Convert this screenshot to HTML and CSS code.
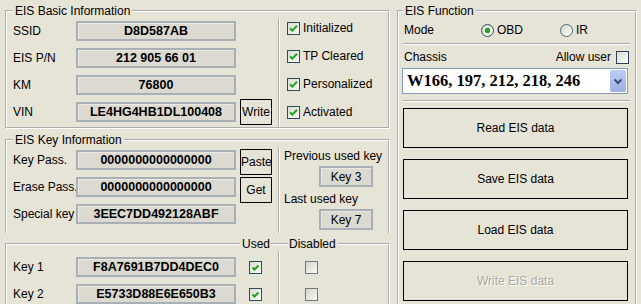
FILE: index.html
```html
<!DOCTYPE html>
<html lang="en">
<head>
    <meta charset="UTF-8">
    <title>EIS Tool</title>
    <link rel="stylesheet" href="styles.css">
</head>
<body>
<div class="window">

    <div class="left">
        <!-- basic info -->
        <fieldset class="group">
            <legend>EIS Basic Information</legend>
            <div class="group-body basic">
                <div class="part">
                    <div class="rows">
                        <div class="row"><span class="lbl">SSID</span><span class="field">D8D587AB</span></div>
                        <div class="row"><span class="lbl">EIS P/N</span><span class="field">212 905 66 01</span></div>
                        <div class="row"><span class="lbl">KM</span><span class="field">76800</span></div>
                        <div class="row"><span class="lbl">VIN</span><span class="field">LE4HG4HB1DL100408</span><button class="btn">Write</button></div>
                    </div>
                </div>
                <div class="side status">
                    <label class="chk"><span class="box on"><svg viewBox="0 0 11 11"><path d="M2 5.2 L4.3 7.6 L9 2.8"/></svg></span>Initialized</label>
                    <label class="chk"><span class="box on"><svg viewBox="0 0 11 11"><path d="M2 5.2 L4.3 7.6 L9 2.8"/></svg></span>TP Cleared</label>
                    <label class="chk"><span class="box on"><svg viewBox="0 0 11 11"><path d="M2 5.2 L4.3 7.6 L9 2.8"/></svg></span>Personalized</label>
                    <label class="chk"><span class="box on"><svg viewBox="0 0 11 11"><path d="M2 5.2 L4.3 7.6 L9 2.8"/></svg></span>Activated</label>
                </div>
            </div>
        </fieldset>

        <!-- key info -->
        <fieldset class="group open-bottom">
            <legend>EIS Key Information</legend>
            <div class="group-body keyinfo">
                <div class="part">
                    <div class="rows">
                        <div class="row"><span class="lbl">Key Pass.</span><span class="field">0000000000000000</span></div>
                        <div class="row"><span class="lbl">Erase Pass.</span><span class="field">0000000000000000</span></div>
                        <div class="row"><span class="lbl">Special key</span><span class="field">3EEC7DD492128ABF</span></div>
                    </div>
                    <div class="btns">
                        <button class="btn">Paste</button>
                        <button class="btn">Get</button>
                    </div>
                </div>
                <div class="side used-keys">
                    <span>Previous used key</span>
                    <span class="field slot">Key 3</span>
                    <span class="gap">Last used key</span>
                    <span class="field slot">Key 7</span>
                </div>
            </div>
        </fieldset>

        <!-- keys -->
        <fieldset class="group">
            <legend class="cols"><span>Used</span><span class="tick-line"></span><span>Disabled</span></legend>
            <div class="group-body keys">
                <div class="part">
                    <div class="rows">
                        <div class="row"><span class="lbl">Key 1</span><span class="field">F8A7691B7DD4DEC0</span><span class="box on used"><svg viewBox="0 0 11 11"><path d="M2.5 5.5 L4.5 7.5 L8.5 3.5"/></svg></span></div>
                        <div class="row"><span class="lbl">Key 2</span><span class="field">E5733D88E6E650B3</span><span class="box on used"><svg viewBox="0 0 11 11"><path d="M2.5 5.5 L4.5 7.5 L8.5 3.5"/></svg></span></div>
                    </div>
                </div>
                <div class="side disabled-col">
                    <div class="row"><span class="box off"></span></div>
                    <div class="row"><span class="box off"></span></div>
                </div>
            </div>
        </fieldset>
    </div>

    <!-- functions -->
    <fieldset class="group func">
        <legend>EIS Function</legend>
        <div class="mode-row">
            <span class="mode-lbl">Mode</span>
            <label class="radio obd"><span class="dot on"></span>OBD</label>
            <label class="radio"><span class="dot"></span>IR</label>
        </div>
        <div class="sep"></div>
        <div class="chassis-row">
            <span>Chassis</span>
            <label class="chk allow">Allow user<span class="box plain"></span></label>
        </div>
        <div class="combo">
            <span class="combo-text">W166, 197, 212, 218, 246</span>
            <span class="combo-btn"><svg viewBox="0 0 16 22"><path d="M4.5 9.5 L8 13 L11.5 9.5"/></svg></span>
        </div>
        <div class="sep sep-low"></div>
        <div class="actions">
            <button class="big-btn">Read EIS data</button>
            <button class="big-btn">Save EIS data</button>
            <button class="big-btn">Load EIS data</button>
            <button class="big-btn" disabled>Write EIS data</button>
        </div>
    </fieldset>

</div>
</body>
</html>
```

FILE: styles.css
```css
html, body {
    margin: 0;
    height: 304px;
    overflow: hidden;
}
body {
    background: #e6e3d7;
    font-family: "Liberation Sans", Arial, sans-serif;
    font-size: 12px;
    color: #000;
}
.window {
    display: flex;
    gap: 7px;
    padding: 4px 0 0 5px;
}
.left {
    width: 385px;
    display: flex;
    flex-direction: column;
    gap: 4px;
}

/* group boxes */
.group {
    margin: 0;
    padding: 0;
    min-width: 0;
    border: 2px groove #fff;
}
.group > legend {
    margin-left: 6px;
    padding: 0 2px;
    line-height: 14px;
}
.open-bottom {
    border-bottom: none;
}
.group-body {
    display: flex;
}
.part {
    width: 271px;
    box-sizing: border-box;
    padding-left: 6px;
    display: flex;
}
.side {
    flex: 1;
    border-left: 2px groove #fff;
}
.rows {
    display: flex;
    flex-direction: column;
    gap: 1px;
}
.row {
    display: flex;
    align-items: center;
    height: 26px;
}
.lbl {
    width: 63px;
    white-space: nowrap;
}
.field {
    width: 160px;
    height: 20px;
    box-sizing: border-box;
    display: flex;
    align-items: center;
    justify-content: center;
    font-weight: bold;
    font-size: 12.5px;
    background: #dcdad0;
    border: 2px solid #a8afb6;
    box-shadow: inset 1px 1px 0 #eceae2;
}
.btn {
    width: 32px;
    height: 26px;
    margin-left: 4px;
    padding: 0;
    border: 1px solid #000;
    background: transparent;
    font: inherit;
    color: #000;
}

/* checkboxes */
.box {
    width: 13px;
    height: 13px;
    box-sizing: border-box;
    flex: none;
    border: 1px solid #2a4f5a;
    background: linear-gradient(135deg, #dcdcd4, #fbfbf8);
}
.box svg {
    display: block;
    width: 11px;
    height: 11px;
}
.box path {
    fill: none;
    stroke: #21a121;
    stroke-width: 2;
}
.box.off {
    border-color: #6f7a80;
    background: linear-gradient(135deg, #d6d5cc, #fafaf6);
}
.box.plain {
    border-color: #2d3f5c;
}
.chk {
    display: flex;
    align-items: center;
    gap: 3px;
    height: 14px;
}

/* basic */
.basic {
    height: 109px;
}
.status {
    padding: 3px 0 0 7px;
    display: flex;
    flex-direction: column;
    gap: 14px;
}

/* key info */
.keyinfo {
    height: 86px;
}
.btns {
    display: flex;
    flex-direction: column;
    gap: 2px;
    padding-top: 2px;
}
.used-keys {
    padding: 2px 0 0 4px;
    display: flex;
    flex-direction: column;
    align-items: flex-start;
}
.used-keys span {
    line-height: 14px;
}
.slot {
    width: 54px;
    height: 21px;
    margin: 3px 0 0 35px;
    font-weight: normal;
    font-size: 12px;
}
.used-keys .gap {
    margin-top: 5px;
}

/* keys */
.group > legend.cols {
    margin-left: 233px;
    display: flex;
    align-items: center;
}
.tick-line {
    width: 17px;
    height: 0;
    margin: 0 1px;
    border-top: 1px solid #ababab;
    border-bottom: 1px solid #fff;
}
.keys {
    padding-top: 3px;
    height: 60px;
}
.used {
    margin-left: 13px;
}
.disabled-col {
    padding: 3px 0 0 25px;
    margin-top: -3px;
    display: flex;
    flex-direction: column;
    gap: 1px;
}

/* function panel */
.func {
    width: 240px;
    height: 320px;
    box-sizing: border-box;
}
.func > legend {
    margin-left: 4px;
}
.mode-row {
    display: flex;
    align-items: center;
    height: 16px;
    margin-top: 4px;
    padding-left: 5px;
}
.mode-lbl {
    width: 77px;
}
.radio {
    display: flex;
    align-items: center;
    gap: 3px;
}
.radio.obd {
    width: 79px;
}
.dot {
    width: 13px;
    height: 13px;
    box-sizing: border-box;
    border-radius: 50%;
    border: 1px solid #4a6a78;
    background: linear-gradient(135deg, #d8d8d0, #fdfdfb);
}
.dot.on {
    border-color: #2e4f4a;
    background: radial-gradient(circle, #21a121 0 2.4px, transparent 3px), linear-gradient(135deg, #d8d8d0, #fdfdfb);
}
.sep {
    height: 0;
    border-top: 2px groove #fff;
    margin: 5px 5px 0 4px;
}
.chassis-row {
    display: flex;
    justify-content: space-between;
    align-items: center;
    height: 14px;
    margin-top: 5px;
    padding: 0 6px 0 5px;
}
.allow {
    gap: 5px;
}
.combo {
    display: flex;
    align-items: center;
    height: 26px;
    box-sizing: border-box;
    margin: 4px 7px 0 3px;
    border: 1px solid #7f9db9;
    background: #fff;
}
.combo-text {
    padding-left: 4px;
    font-family: "Liberation Serif", "Times New Roman", serif;
    font-weight: bold;
    font-size: 16.5px;
}
.combo-btn {
    margin-left: auto;
    margin-right: 1px;
    width: 16px;
    height: 22px;
    border-radius: 2px;
    background: linear-gradient(#bccdf4, #9cb0e2);
}
.combo-btn svg {
    display: block;
    width: 16px;
    height: 22px;
}
.combo-btn path {
    fill: none;
    stroke: #3b4f86;
    stroke-width: 2;
}
.sep-low {
    margin-top: 6px;
}
.actions {
    display: flex;
    flex-direction: column;
    gap: 11px;
    margin: 6px 7px 0 4px;
}
.big-btn {
    height: 40px;
    border: 1px solid #000;
    background: transparent;
    font: inherit;
    color: #000;
}
.big-btn:disabled {
    color: #aba99d;
    text-shadow: 1px 1px 0 #fff;
}
```
